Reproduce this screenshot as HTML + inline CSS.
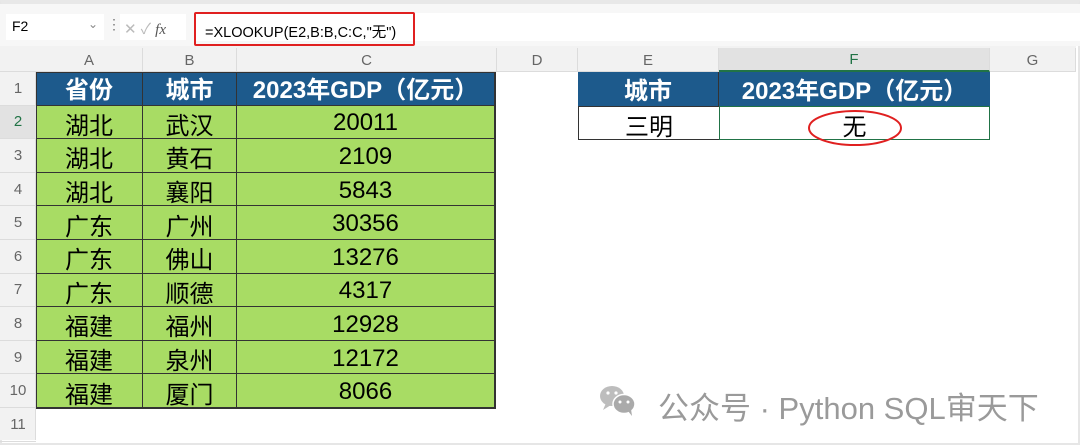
<!DOCTYPE html>
<html><head><meta charset="utf-8"><style>
*{margin:0;padding:0;box-sizing:border-box}
body{width:1080px;height:445px;background:#fff;position:relative;overflow:hidden;font-family:"Liberation Sans","Noto Sans CJK SC",sans-serif}
.a{position:absolute}
.c{position:absolute;display:flex;align-items:center;justify-content:center;font-size:24px;color:#000;white-space:nowrap;padding-top:3px}
.h{background:#1d5a8c;color:#fff;font-weight:bold;padding-top:0;padding-bottom:2px}
.g{background:#a8dc64}
.ch{position:absolute;top:48px;height:24px;font-size:15px;color:#666;display:flex;align-items:center;justify-content:center;border-right:1px solid #dcdcdc}
.rh{position:absolute;left:0;width:36px;font-size:15px;color:#666;display:flex;align-items:center;justify-content:center;border-bottom:1px solid #dcdcdc}
</style></head><body>
<div class="a" style="left:0;top:0;width:1080px;height:445px;border:2px solid #e6e6e6;border-top:4px solid #e8e8e8"></div>
<div class="a" style="left:0;top:4px;width:1080px;height:42px;background:#f7f7f7"></div>
<div class="a" style="left:6px;top:14px;width:98px;height:26px;background:#fff;font-size:14px;padding:4px 6px">F2<span style="position:absolute;right:6px;top:3px;color:#888;font-size:12px">&#8964;</span></div>
<div class="a" style="left:107px;top:16px;color:#777;font-size:14px">&#8942;</div>
<div class="a" style="left:120px;top:14px;width:66px;height:26px;background:#fff;color:#bbb;font-size:15px;padding:4px 4px">✕ ✓ <i style="color:#555;font-family:'Liberation Serif',serif">fx</i></div>
<div class="a" style="left:194px;top:13px;width:1000px;height:28px;background:#fff"></div>
<div class="a" style="left:194px;top:12px;width:221px;height:34px;border:2px solid #e02020;border-radius:2px;font-size:14.5px;padding:7px 0 0 9px;color:#000">=XLOOKUP(E2,B:B,C:C,"无")</div>
<div class="a" style="left:0;top:46px;width:1076px;height:26px;background:#f2f2f2;border-bottom:1px solid #dcdcdc"></div>
<div class="a" style="left:0;top:72px;width:36px;height:368px;background:#f2f2f2;border-right:1px solid #dcdcdc"></div>
<div class="ch" style="left:36px;width:107px">A</div>
<div class="ch" style="left:143px;width:94px">B</div>
<div class="ch" style="left:237px;width:260px">C</div>
<div class="ch" style="left:497px;width:81px">D</div>
<div class="ch" style="left:578px;width:141px">E</div>
<div class="ch" style="left:719px;width:271px;background:#e2e2e2;color:#217346;border-bottom:2px solid #217346">F</div>
<div class="ch" style="left:990px;width:86px">G</div>
<div id="rows"></div>
<div class="a" style="left:36px;top:72px;width:460px;height:337px;border:1px solid #333"></div>
<svg class="a" style="left:0;top:0" width="1080" height="445">
<ellipse cx="855" cy="128" rx="46" ry="17" fill="none" stroke="#e02020" stroke-width="2"/>
<g fill="#bdbdbd"><ellipse cx="612" cy="396" rx="12" ry="10"/><path d="M606 403 l-3 7 l8 -5z"/></g>
<g fill="#aaa" stroke="#fff" stroke-width="1.5"><ellipse cx="624" cy="404" rx="11" ry="9.5"/></g>
<path d="M628 411 l4 5 l-1 -7z" fill="#aaa"/>
<g fill="#fff"><circle cx="608" cy="393" r="1.6"/><circle cx="616" cy="393" r="1.6"/><circle cx="620" cy="402" r="1.5"/><circle cx="628" cy="402" r="1.5"/></g>
</svg>
<div class="a" style="left:658px;top:383px;font-size:31px;color:#9a9a9a;white-space:nowrap">公众号 · Python SQL审天下</div>
<script>
var L=[36,143,237,495],R=[["省份","城市","2023年GDP（亿元）"],["湖北","武汉","20011"],["湖北","黄石","2109"],["湖北","襄阳","5843"],["广东","广州","30356"],["广东","佛山","13276"],["广东","顺德","4317"],["福建","福州","12928"],["福建","泉州","12172"],["福建","厦门","8066"]];
var h="",rh=33.6;
for(var i=0;i<11;i++){var t=72+i*rh;h+='<div class="rh" style="top:'+t+'px;height:'+rh+'px;'+(i==1?'color:#217346;background:#e2e2e2':'')+'">'+(i+1)+'</div>';}
for(var i=0;i<10;i++){var t=72+i*rh;for(var j=0;j<3;j++){h+='<div class="c '+(i?'g':'h')+'" style="left:'+L[j]+'px;top:'+t+'px;width:'+(L[j+1]-L[j])+'px;height:'+rh+'px;border-right:1px solid #333;border-bottom:1px solid #333">'+R[i][j]+'</div>';}}
h+='<div class="c h" style="left:578px;top:72px;width:141px;height:34px;border-right:1px solid #333">城市</div>';
h+='<div class="c h" style="left:719px;top:72px;width:271px;height:34px">2023年GDP（亿元）</div>';
h+='<div class="c" style="left:578px;top:106px;width:141px;height:34px;border:1px solid #333;border-right:none">三明</div>';
h+='<div class="c" style="left:719px;top:106px;width:271px;height:34px;border:1.5px solid #217346">无</div>';
document.getElementById("rows").innerHTML=h;
</script>
</body></html>
